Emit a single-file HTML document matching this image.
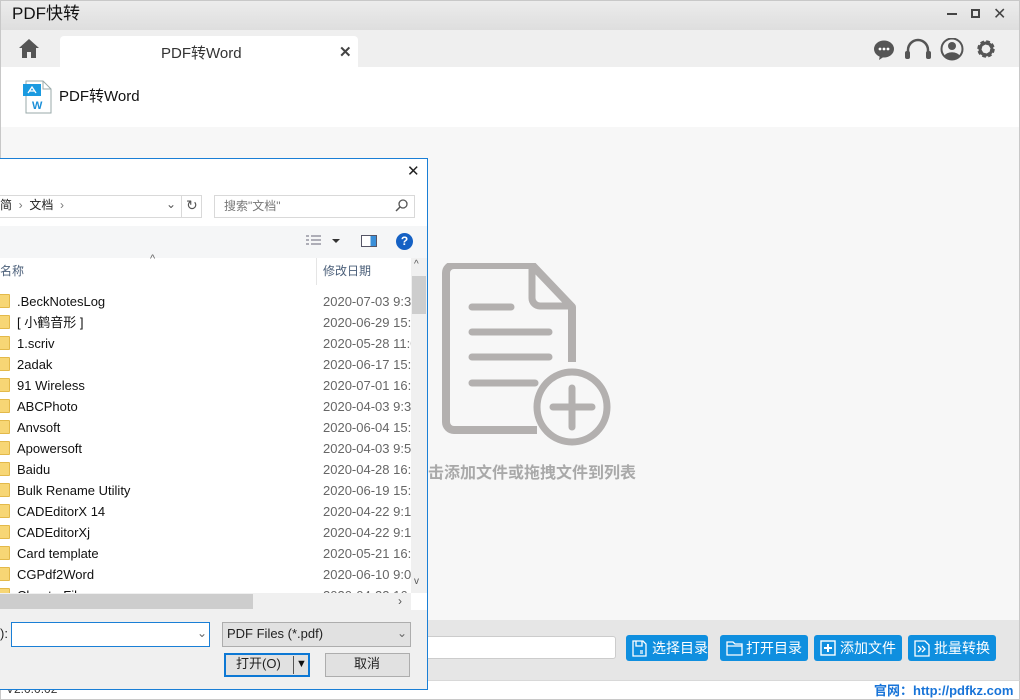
<!DOCTYPE html>
<html><head><meta charset="utf-8"><style>
*{margin:0;padding:0;box-sizing:border-box}
body{width:1020px;height:700px;overflow:hidden;background:#fff;font-family:"Liberation Sans","Noto Sans CJK SC",sans-serif;position:relative}
.a{position:absolute;line-height:1.2}
.row{position:absolute;left:0;width:411px;height:21px;font-size:13px;color:#111;line-height:17px}
.row .f{position:absolute;left:-4px;top:3px;width:14px;height:14px;background:#f7d675;border:1px solid #e3b94a;border-radius:1px}
.row .n{position:absolute;left:17px;top:2px;white-space:nowrap}
.row .d{position:absolute;left:323px;top:2px;color:#666;white-space:nowrap}
.btn{position:absolute;top:635px;height:26px;background:#0f8fdf;border-radius:3px;color:#fff;font-size:14px;line-height:26px}
.btn span{position:absolute;left:26px;line-height:26px}
</style></head><body>
<div class="a" style="left:0;top:0;width:1020px;height:30px;background:linear-gradient(#ececec,#dedede);border:1px solid #c8c8c8;border-bottom:none"></div>
<div class="a" style="left:12px;top:4px;font-size:17px;color:#111">PDF快转</div>
<div class="a" style="left:947px;top:13px;width:10px;height:2px;background:#444"></div>
<div class="a" style="left:971px;top:9px;width:9px;height:9px;border:2px solid #444"></div>
<div class="a" style="left:993px;top:5px;font-size:16px;color:#444">✕</div>
<div class="a" style="left:0;top:30px;width:1020px;height:37px;background:#efefef;border-left:1px solid #c8c8c8;border-right:1px solid #c8c8c8"></div>
<svg class="a" style="left:18px;top:38px" width="22" height="21" viewBox="0 0 22 21"><path d="M11 1 L21 10 L18 10 L18 20 L13 20 L13 14 L9 14 L9 20 L4 20 L4 10 L1 10 Z" fill="#555"/></svg>
<div class="a" style="left:60px;top:36px;width:298px;height:31px;background:#fff;border-radius:4px 4px 0 0"></div>
<div class="a" style="left:161px;top:45px;font-size:15px;color:#333">PDF转Word</div>
<div class="a" style="left:339px;top:44px;font-size:15px;color:#444;font-weight:bold">✕</div>
<svg class="a" style="left:872px;top:38px" width="126" height="24" viewBox="0 0 126 24">
<ellipse cx="12" cy="11" rx="10" ry="8.5" fill="#555"/><path d="M8 17 L7 22 L13 18Z" fill="#555"/><circle cx="8" cy="11" r="1.4" fill="#fff"/><circle cx="12" cy="11" r="1.4" fill="#fff"/><circle cx="16" cy="11" r="1.4" fill="#fff"/>
<path d="M36 18 V12 a10 10 0 0 1 20 0 V18" fill="none" stroke="#555" stroke-width="2.5"/><rect x="33" y="13" width="5" height="8" rx="2" fill="#555"/><rect x="54" y="13" width="5" height="8" rx="2" fill="#555"/>
<circle cx="80" cy="11" r="10.5" fill="none" stroke="#555" stroke-width="2"/><circle cx="80" cy="8" r="4" fill="#555"/><path d="M72 18 a9 7 0 0 1 16 0 a10 10 0 0 1 -16 0Z" fill="#555"/>
<circle cx="114" cy="11" r="6.5" fill="none" stroke="#555" stroke-width="4.5" stroke-dasharray="3.2 1.9"/><circle cx="114" cy="11" r="6" fill="none" stroke="#555" stroke-width="3"/>
</svg>
<div class="a" style="left:0;top:67px;width:1020px;height:60px;background:#fff;border-left:1px solid #c8c8c8;border-right:1px solid #c8c8c8"></div>
<svg class="a" style="left:23px;top:80px" width="30" height="34" viewBox="0 0 30 34"><path d="M3 1 H20 L28 9 V33 H3Z" fill="#fff" stroke="#9aa" stroke-width="1"/><path d="M20 1 V9 H28" fill="none" stroke="#9aa"/><rect x="0" y="4" width="18" height="12" fill="#1a9ae0"/><path d="M5 13 L9 7 L13 13 M6 11 H12" stroke="#fff" stroke-width="1.3" fill="none"/><text x="9" y="29" font-size="11" font-weight="bold" fill="#1a8fd8" font-family="Liberation Sans">W</text></svg>
<div class="a" style="left:59px;top:88px;font-size:15px;color:#111">PDF转Word</div>
<div class="a" style="left:0;top:127px;width:1020px;height:493px;background:#f7f7f7;border-left:1px solid #c8c8c8;border-right:1px solid #c8c8c8"></div>
<svg class="a" style="left:440px;top:263px" width="175" height="190" viewBox="0 0 175 190">
<path d="M8 2 H92 L132 44 V99 M97 167 H14 a8 8 0 0 1 -8 -8 V10 a8 8 0 0 1 8 -8" fill="none" stroke="#b3b0af" stroke-width="8" stroke-linejoin="round"/>
<path d="M92 3 V35 a8 8 0 0 0 8 8 H131" fill="none" stroke="#b3b0af" stroke-width="7"/>
<g stroke="#b3b0af" stroke-width="7" stroke-linecap="round"><line x1="32" y1="44" x2="71" y2="44"/><line x1="32" y1="69" x2="109" y2="69"/><line x1="32" y1="94" x2="109" y2="94"/><line x1="32" y1="120" x2="95" y2="120"/></g>
<circle cx="132" cy="144" r="35" fill="#f7f7f7" stroke="#b3b0af" stroke-width="7"/>
<g stroke="#b3b0af" stroke-width="7" stroke-linecap="round"><line x1="132" y1="125" x2="132" y2="164"/><line x1="113" y1="144" x2="152" y2="144"/></g>
</svg>
<div class="a" style="left:428px;top:464px;font-size:16px;font-weight:bold;color:#a9a9a9">击添加文件或拖拽文件到列表</div>
<div class="a" style="left:0;top:620px;width:1020px;height:60px;background:#e6e6e6;border-left:1px solid #c8c8c8;border-right:1px solid #c8c8c8"></div>
<div class="a" style="left:420px;top:636px;width:196px;height:23px;background:#fff;border:1px solid #ccc;border-radius:3px"></div>
<div class="btn" style="left:626px;width:82px"><svg class="a" style="left:6px;top:5px" width="15" height="17"><path d="M1 1H11L14 4V16H1Z M4 1V6H10V1 M8 11H11 M8 13H11" fill="none" stroke="#fff" stroke-width="1.3"/></svg><span>选择目录</span></div>
<div class="btn" style="left:720px;width:88px"><svg class="a" style="left:6px;top:6px" width="17" height="15"><path d="M1 1H7L9 3H16V14H1Z M1 5H16" fill="none" stroke="#fff" stroke-width="1.3"/></svg><span>打开目录</span></div>
<div class="btn" style="left:814px;width:88px"><svg class="a" style="left:6px;top:5px" width="16" height="16"><rect x="1" y="1" width="14" height="14" fill="none" stroke="#fff" stroke-width="1.4"/><path d="M8 4V12M4 8H12" stroke="#fff" stroke-width="2"/></svg><span>添加文件</span></div>
<div class="btn" style="left:908px;width:88px"><svg class="a" style="left:6px;top:5px" width="16" height="17"><path d="M1 1H11L15 5V16H1Z" fill="none" stroke="#fff" stroke-width="1.3"/><path d="M4 6L7 9L4 12M8 6L11 9L8 12" fill="none" stroke="#fff" stroke-width="1.3"/></svg><span>批量转换</span></div>
<div class="a" style="left:0;top:680px;width:1020px;height:20px;background:#fff;border:1px solid #c8c8c8;border-top:1px solid #d8d8d8"></div>
<div class="a" style="left:6px;top:682px;font-size:12px;color:#333">V2.0.0.02</div>
<div class="a" style="left:874px;top:683px;font-size:13px;color:#1874d8;font-weight:bold">官网：http://pdfkz.com</div>
<!-- dialog -->
<div class="a" style="left:-2px;top:158px;width:430px;height:532px;background:#fff;border:1px solid #1a7fd6"></div>
<div class="a" style="left:407px;top:163px;font-size:15px;color:#222">✕</div>
<div class="a" style="left:0;top:195px;width:202px;height:23px;border:1px solid #d9d9d9;border-left:none"></div>
<div class="a" style="left:181px;top:195px;width:1px;height:23px;background:#d9d9d9"></div>
<div class="a" style="left:0;top:198px;font-size:12px;color:#222">简 &nbsp;<span style="color:#777">›</span>&nbsp; 文档 &nbsp;<span style="color:#777">›</span></div>
<div class="a" style="left:166px;top:197px;font-size:12px;color:#555">⌄</div>
<div class="a" style="left:186px;top:197px;font-size:14px;color:#555">↻</div>
<div class="a" style="left:214px;top:195px;width:201px;height:23px;border:1px solid #d9d9d9"></div>
<div class="a" style="left:224px;top:199px;font-size:12px;color:#777">搜索"文档"</div>
<svg class="a" style="left:395px;top:199px" width="13" height="14"><circle cx="8" cy="5" r="4" fill="none" stroke="#555" stroke-width="1.3"/><line x1="5" y1="8" x2="1" y2="12" stroke="#555" stroke-width="1.5"/></svg>
<div class="a" style="left:0;top:226px;width:427px;height:32px;background:#f5f6f7"></div>
<svg class="a" style="left:305px;top:234px" width="40" height="14"><g stroke="#667" stroke-width="1"><path d="M1 2H4M1 6H4M1 10H4M6 2H16M6 6H16M6 10H16"/></g><path d="M27 5H35L31 9Z" fill="#333"/></svg>
<div class="a" style="left:361px;top:235px;width:16px;height:12px;border:1px solid #556;background:linear-gradient(90deg,#fff 60%,#3a8fd8 60%)"></div>
<div class="a" style="left:396px;top:233px;width:17px;height:17px;border-radius:50%;background:#1561c4;color:#fff;font-size:12px;font-weight:bold;text-align:center;line-height:17px">?</div>
<div class="a" style="left:150px;top:253px;font-size:11px;color:#666">^</div>
<div class="a" style="left:0;top:264px;font-size:12px;color:#4c607a">名称</div>
<div class="a" style="left:316px;top:258px;width:1px;height:27px;background:#e5e5e5"></div>
<div class="a" style="left:323px;top:264px;font-size:12px;color:#4c607a">修改日期</div>
<div class="a" style="left:411px;top:258px;width:16px;height:335px;background:#f0f0f0"></div>
<div class="a" style="left:412px;top:276px;width:14px;height:38px;background:#cdcdcd"></div>
<div class="a" style="left:414px;top:259px;font-size:10px;color:#555">^</div>
<div class="a" style="left:414px;top:576px;font-size:10px;color:#555">v</div>
<div class="a" style="left:0;top:291px;width:411px;height:302px;overflow:hidden">
<div class="row" style="top:0"><div class="f"></div><div class="n">.BeckNotesLog</div><div class="d">2020-07-03 9:30</div></div>
<div class="row" style="top:21px"><div class="f"></div><div class="n">[ 小鹤音形 ]</div><div class="d">2020-06-29 15:2</div></div>
<div class="row" style="top:42px"><div class="f"></div><div class="n">1.scriv</div><div class="d">2020-05-28 11:0</div></div>
<div class="row" style="top:63px"><div class="f"></div><div class="n">2adak</div><div class="d">2020-06-17 15:4</div></div>
<div class="row" style="top:84px"><div class="f"></div><div class="n">91 Wireless</div><div class="d">2020-07-01 16:0</div></div>
<div class="row" style="top:105px"><div class="f"></div><div class="n">ABCPhoto</div><div class="d">2020-04-03 9:3</div></div>
<div class="row" style="top:126px"><div class="f"></div><div class="n">Anvsoft</div><div class="d">2020-06-04 15:1</div></div>
<div class="row" style="top:147px"><div class="f"></div><div class="n">Apowersoft</div><div class="d">2020-04-03 9:5</div></div>
<div class="row" style="top:168px"><div class="f"></div><div class="n">Baidu</div><div class="d">2020-04-28 16:</div></div>
<div class="row" style="top:189px"><div class="f"></div><div class="n">Bulk Rename Utility</div><div class="d">2020-06-19 15:</div></div>
<div class="row" style="top:210px"><div class="f"></div><div class="n">CADEditorX 14</div><div class="d">2020-04-22 9:1</div></div>
<div class="row" style="top:231px"><div class="f"></div><div class="n">CADEditorXj</div><div class="d">2020-04-22 9:1</div></div>
<div class="row" style="top:252px"><div class="f"></div><div class="n">Card template</div><div class="d">2020-05-21 16:</div></div>
<div class="row" style="top:273px"><div class="f"></div><div class="n">CGPdf2Word</div><div class="d">2020-06-10 9:0</div></div>
<div class="row" style="top:294px"><div class="f"></div><div class="n">ChapterFile</div><div class="d">2020-04-22 16:</div></div>
</div>
<div class="a" style="left:0;top:593px;width:411px;height:17px;background:#f0f0f0"></div>
<div class="a" style="left:0;top:594px;width:253px;height:15px;background:#cdcdcd"></div>
<div class="a" style="left:398px;top:594px;font-size:12px;color:#555">›</div>
<div class="a" style="left:0;top:610px;width:427px;height:79px;background:#f0f0f0"></div>
<div class="a" style="left:0;top:626px;font-size:13px;color:#222">):</div>
<div class="a" style="left:11px;top:622px;width:199px;height:25px;background:#fff;border:1px solid #1a7fd6"></div>
<div class="a" style="left:197px;top:626px;font-size:12px;color:#666">⌄</div>
<div class="a" style="left:222px;top:622px;width:189px;height:25px;background:#e1e1e1;border:1px solid #adadad"></div>
<div class="a" style="left:227px;top:626px;font-size:13px;color:#222">PDF Files (*.pdf)</div>
<div class="a" style="left:397px;top:626px;font-size:12px;color:#666">⌄</div>
<div class="a" style="left:224px;top:653px;width:86px;height:24px;background:#e1e1e1;border:2px solid #0d78d4"></div>
<div class="a" style="left:236px;top:656px;font-size:13px;color:#222">打开(O)</div>
<div class="a" style="left:293px;top:656px;width:1px;height:18px;background:#555"></div>
<div class="a" style="left:296px;top:658px;font-size:11px;color:#111">▼</div>
<div class="a" style="left:325px;top:653px;width:85px;height:24px;background:#e1e1e1;border:1px solid #adadad"></div>
<div class="a" style="left:354px;top:656px;font-size:13px;color:#222">取消</div>
</body></html>
